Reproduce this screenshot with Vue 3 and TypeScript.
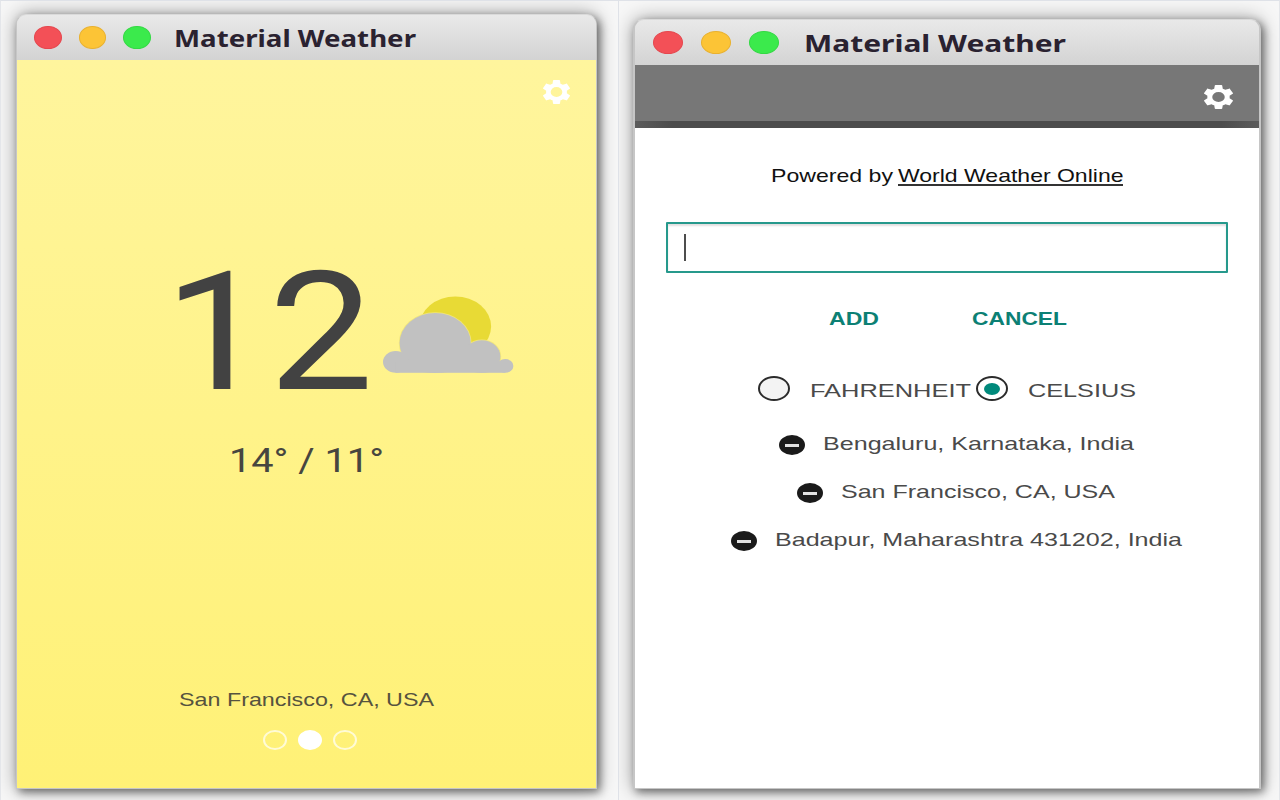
<script setup lang="ts">
import { h } from 'vue'

interface StretchProps {
  text: string
  width: number
  size: number
  height?: number
  baseline?: number
}

// A line of wide-set text, fitted to a given width.
const WideText = (p: StretchProps) =>
  h('svg', { class: 'wide', width: p.width, height: p.height ?? 24 }, [
    h(
      'text',
      {
        x: 0,
        y: p.baseline ?? 18,
        'font-size': p.size,
        textLength: p.width,
        lengthAdjust: 'spacingAndGlyphs',
      },
      p.text,
    ),
  ])
WideText.props = ['text', 'width', 'size', 'height', 'baseline']

const gear =
  'M19.43 12.98c.04-.32.07-.64.07-.98s-.03-.66-.07-.98l2.11-1.65c.19-.15.24-.42.12-.64l-2-3.46c-.12-.22-.39-.3-.61-.22l-2.49 1c-.52-.4-1.08-.73-1.69-.98l-.38-2.65C14.46 2.18 14.25 2 14 2h-4c-.25 0-.46.18-.49.42l-.38 2.65c-.61.25-1.17.59-1.69.98l-2.49-1c-.23-.09-.49 0-.61.22l-2 3.46c-.13.22-.07.49.12.64l2.11 1.65c-.04.32-.07.65-.07.98s.03.66.07.98l-2.11 1.65c-.19.15-.24.42-.12.64l2 3.46c.12.22.39.3.61.22l2.49-1c.52.4 1.08.73 1.69.98l.38 2.65c.03.24.24.42.49.42h4c.25 0 .46-.18.49-.42l.38-2.65c.61-.25 1.17-.59 1.69-.98l2.49 1c.23.09.49 0 .61-.22l2-3.46c.12-.22.07-.49-.12-.64l-2.11-1.65zM12 16.2a4.2 4.2 0 1 1 0-8.4 4.2 4.2 0 0 1 0 8.4z'

const lights = ['red', 'amber', 'green']
const units = [
  { label: 'FAHRENHEIT', width: 161, on: false },
  { label: 'CELSIUS', width: 108, on: true },
]
const cities = [
  { name: 'Bengaluru, Karnataka, India', width: 311 },
  { name: 'San Francisco, CA, USA', width: 274 },
  { name: 'Badapur, Maharashtra 431202, India', width: 407 },
]
const pages = [false, true, false]
</script>

<template>
  <main class="desk">
    <section class="half half-left">
      <div class="window">
        <header class="bar">
          <i v-for="c in lights" :key="c" class="light" :class="c"></i>
          <WideText class="title" text="Material Weather" :width="242" :size="22.5" :height="30" :baseline="23.5" />
        </header>
        <div class="weather">
          <svg class="gear" width="27" height="24" viewBox="2.27 2 19.46 20" preserveAspectRatio="none">
            <path :d="gear" />
          </svg>
          <div class="now">
            <WideText class="digits" text="12" :width="209.5" :size="166" :height="130" :baseline="124" />
            <svg class="cloud" width="131" height="77" viewBox="13 11 131 77">
              <ellipse cx="85.3" cy="41.5" rx="35.8" ry="30" fill="#e8da35" />
              <g fill="#f1e67c">
                <ellipse cx="65.2" cy="58" rx="36.4" ry="30.8" />
                <ellipse cx="111.8" cy="71.5" rx="19.4" ry="17" />
              </g>
              <g fill="#c1c1c1">
                <ellipse cx="65.2" cy="58" rx="35.6" ry="30" />
                <ellipse cx="25.7" cy="76.9" rx="12.7" ry="10.9" />
                <ellipse cx="111.8" cy="71.5" rx="18.6" ry="16.2" />
                <ellipse cx="135.2" cy="80.9" rx="8.2" ry="6.9" />
                <rect x="25.7" y="77" width="109.5" height="10.8" />
                <rect x="50" y="64" width="65" height="20" />
              </g>
            </svg>
          </div>
          <WideText class="range digits" text="14° / 11°" :width="155" :size="33.3" :height="36" :baseline="28" />
          <WideText class="place" text="San Francisco, CA, USA" :width="255" :size="18.5" />
          <div class="dots">
            <i v-for="(on, n) in pages" :key="n" class="dot" :class="{ on }"></i>
          </div>
        </div>
      </div>
    </section>

    <section class="half half-right">
      <div class="window">
        <header class="bar">
          <i v-for="c in lights" :key="c" class="light" :class="c"></i>
          <WideText class="title" text="Material Weather" :width="262" :size="22.5" :height="30" :baseline="23.5" />
        </header>
        <div class="settings">
          <div class="toolbar">
            <svg class="gear" width="29" height="24" viewBox="2.27 2 19.46 20" preserveAspectRatio="none">
              <path :d="gear" />
            </svg>
          </div>
          <p class="powered">
            <WideText text="Powered by" :width="122" :size="18.5" />
            <a class="link"><WideText text="World Weather Online" :width="225.5" :size="18.5" /></a>
          </p>
          <div class="field"><span class="caret"></span></div>
          <div class="actions">
            <WideText text="ADD" :width="50" :size="18.5" />
            <WideText text="CANCEL" :width="95" :size="18.5" />
          </div>
          <div class="units">
            <div v-for="u in units" :key="u.label" class="unit">
              <span class="radio" :class="{ on: u.on }"></span>
              <WideText :text="u.label" :width="u.width" :size="18.5" />
            </div>
          </div>
          <ul class="cities">
            <li v-for="c in cities" :key="c.name">
              <span class="minus"></span>
              <WideText :text="c.name" :width="c.width" :size="18.5" />
            </li>
          </ul>
        </div>
      </div>
    </section>
  </main>
</template>

<style>
body {
  margin: 0;
}
</style>

<style scoped>
.desk {
  display: flex;
  width: 1280px;
  height: 800px;
  overflow: hidden;
  box-sizing: border-box;
  background: #f7f7f7;
  font-family: 'Liberation Sans', Arial, sans-serif;
}
.half {
  box-sizing: border-box;
  height: 800px;
  overflow: hidden;
  border-top: 1px solid #dfe2e8;
}
.half-left {
  width: 618px;
  padding: 13px 21px 0 15px;
  border-left: 1px solid #e4e6ea;
}
.half-right {
  width: 662px;
  padding: 18px 18px 0 14px;
  border-left: 1px solid #dfe2e8;
  border-right: 1px solid #e4e6ea;
}
.window {
  box-sizing: border-box;
  height: 775px;
  border: 1px solid #c6c6c6;
  border-top-color: #dadada;
  border-radius: 10px 10px 0 0;
  background: #dcdcdc;
  box-shadow:
    3px 3px 8px rgba(0, 0, 0, 0.48),
    0 0 20px rgba(0, 0, 0, 0.36);
}
.half-right .window {
  height: 770px;
  border-width: 1px 2px;
}
.wide {
  display: block;
  flex: none;
  overflow: visible;
  fill: currentColor;
}
.digits {
  font-family: Roboto, 'Liberation Sans', sans-serif;
}
.bar {
  display: flex;
  align-items: center;
  box-sizing: border-box;
  height: 45px;
  padding-left: 17px;
  border-radius: 9px 9px 0 0;
  background: linear-gradient(#e9e9e9, #d3d3d3);
}
.half-right .bar {
  padding-left: 18px;
}
.light {
  box-sizing: border-box;
  width: 27.5px;
  height: 23px;
  margin-right: 17px;
  border: 1px solid;
  border-radius: 50%;
}
.half-right .light {
  width: 30px;
  margin-right: 18px;
}
.red {
  background: #f35057;
  border-color: #e5474e;
}
.amber {
  background: #fcc436;
  border-color: #e9b12f;
}
.green {
  background: #3bea4c;
  border-color: #34d944;
}
.title {
  margin-left: 6px;
  color: #2a2230;
  font-family: 'Noto Sans', sans-serif;
  font-weight: 700;
}
.half-right .title {
  margin-left: 7px;
}
.weather {
  display: flex;
  flex-direction: column;
  align-items: center;
  height: 728px;
  color: #424242;
  background: linear-gradient(#fff59d, #fff176);
}
.gear {
  flex: none;
  align-self: flex-end;
  margin: 20px 26px 0 0;
  fill: #fff;
}
.now {
  display: flex;
  align-self: flex-start;
  margin: 161px 0 0 147px;
}
.cloud {
  margin: 31px 0 0 9px;
}
.range {
  margin-top: 49px;
  color: #47463f;
}
.place {
  margin-top: 208px;
  color: #56533f;
}
.dots {
  display: flex;
  gap: 11px;
  margin: 18px 0 0 7px;
}
.dot {
  box-sizing: border-box;
  width: 23.7px;
  height: 20px;
  border: 2px solid #fffbd6;
  border-radius: 50%;
}
.dot.on {
  border-color: #fff;
  background: #fff;
}
.settings {
  height: 723px;
  display: flex;
  flex-direction: column;
  align-items: center;
  background: #fff;
}
.toolbar {
  display: flex;
  justify-content: flex-end;
  box-sizing: border-box;
  width: 100%;
  height: 63px;
  background:
    linear-gradient(90deg, #5c5c5c, #4c4c4c 6%, #4c4c4c 94%, #5c5c5c) bottom / 100% 7px no-repeat,
    #777;
}
.toolbar .gear {
  align-self: flex-start;
}
.powered {
  display: flex;
  gap: 5px;
  margin: 36px 0 0;
  color: #111;
}
.link {
  height: 20px;
  border-bottom: 2px solid #333;
}
.field {
  display: flex;
  align-items: center;
  box-sizing: border-box;
  width: 562px;
  height: 51px;
  margin-top: 34px;
  padding-left: 16px;
  border: 2px solid #26998c;
  border-radius: 1px;
  box-shadow: inset 0 2px 2px #e3dfe0;
}
.caret {
  width: 2px;
  height: 27px;
  background: #4d4d4d;
}
.actions {
  display: flex;
  gap: 93px;
  margin: 34px 0 0 2px;
  color: #0c8074;
  font-weight: 700;
}
.units {
  display: flex;
  gap: 5px;
  margin-top: 45px;
  color: #4a4a4a;
}
.unit {
  display: flex;
  gap: 20px;
}
.unit .wide {
  margin-top: 3px;
}
.radio {
  display: flex;
  align-items: center;
  justify-content: center;
  box-sizing: border-box;
  width: 32px;
  height: 25px;
  border: 2px solid #2b2b2b;
  border-radius: 50%;
  background: #f3f3f3;
}
.radio.on {
  background: #fff;
}
.radio.on::after {
  content: '';
  width: 16px;
  height: 12px;
  border-radius: 50%;
  background: #00897b;
}
.cities {
  display: flex;
  flex-direction: column;
  align-items: center;
  gap: 24px;
  margin: 29px 0 0 18px;
  padding: 0;
  list-style: none;
  color: #4a4a4a;
}
.cities li {
  display: flex;
  gap: 18px;
}
.minus {
  display: flex;
  align-items: center;
  justify-content: center;
  width: 26px;
  height: 20px;
  margin-top: 3px;
  border-radius: 50%;
  background: #1a1a1a;
}
.minus::after {
  content: '';
  width: 14px;
  height: 3px;
  background: #e2e2e2;
}
</style>
